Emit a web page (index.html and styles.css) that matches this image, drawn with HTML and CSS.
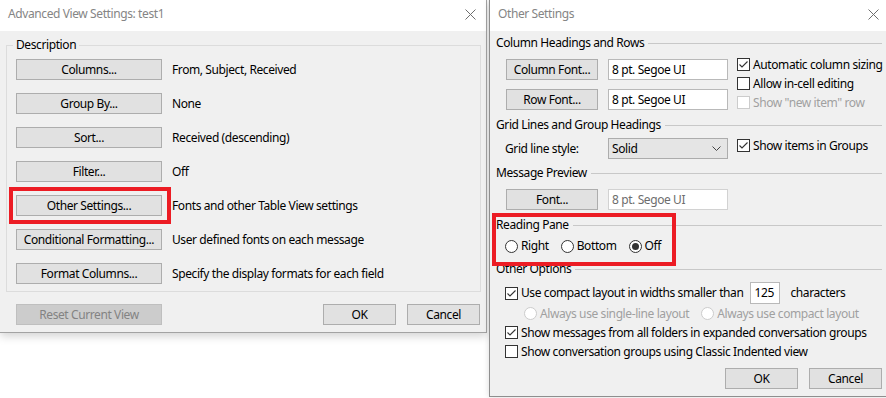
FILE: index.html
```html
<!DOCTYPE html>
<html lang="en">
<head>
    <meta charset="UTF-8">
    <meta name="viewport" content="width=device-width, initial-scale=1.0">
    <title>Advanced View Settings - Other Settings</title>
    <link rel="stylesheet" href="styles.css">
</head>
<body>
    <div class="desktop">

        <!-- Advanced View Settings dialog -->
        <div class="dialog dialog-view">
            <div class="titlebar">
                <span class="title">Advanced View Settings: test1</span>
                <svg class="close" width="11" height="11" viewBox="0 0 11 11"><path d="M0.5 0.5L10.5 10.5M10.5 0.5L0.5 10.5"/></svg>
            </div>
            <div class="dialog-body">
                <fieldset class="group">
                    <legend>Description</legend>
                    <div class="desc-list">
                        <div class="desc-row"><button class="btn btn-wide">Columns...</button><span>From, Subject, Received</span></div>
                        <div class="desc-row"><button class="btn btn-wide">Group By...</button><span>None</span></div>
                        <div class="desc-row"><button class="btn btn-wide">Sort...</button><span>Received (descending)</span></div>
                        <div class="desc-row"><button class="btn btn-wide">Filter...</button><span>Off</span></div>
                        <div class="desc-row"><button class="btn btn-wide">Other Settings...</button><span>Fonts and other Table View settings</span></div>
                        <div class="desc-row"><button class="btn btn-wide">Conditional Formatting...</button><span>User defined fonts on each message</span></div>
                        <div class="desc-row"><button class="btn btn-wide">Format Columns...</button><span>Specify the display formats for each field</span></div>
                    </div>
                </fieldset>
                <div class="view-footer">
                    <button class="btn btn-wide" disabled>Reset Current View</button>
                    <div class="actions">
                        <button class="btn btn-action">OK</button>
                        <button class="btn btn-action">Cancel</button>
                    </div>
                </div>
            </div>
            <div class="callout callout-view"></div>
        </div>

        <!-- Other Settings dialog -->
        <div class="dialog dialog-other">
            <div class="titlebar">
                <span class="title">Other Settings</span>
                <svg class="close" width="11" height="11" viewBox="0 0 11 11"><path d="M0.5 0.5L10.5 10.5M10.5 0.5L0.5 10.5"/></svg>
            </div>
            <div class="dialog-body">
                <div class="sec-head">Column Headings and Rows</div>
                <div class="font-section">
                    <div class="font-fields">
                        <button class="btn">Column Font...</button>
                        <div class="field">8 pt. Segoe UI</div>
                        <button class="btn">Row Font...</button>
                        <div class="field">8 pt. Segoe UI</div>
                    </div>
                    <div class="checks">
                        <div class="check-row">
                            <span class="box"><svg width="11" height="11" viewBox="0 0 11 11"><path d="M1.5 5.5L4 8L9.5 2.5"/></svg></span>
                            <span>Automatic column sizing</span>
                        </div>
                        <div class="check-row">
                            <span class="box"></span>
                            <span>Allow in-cell editing</span>
                        </div>
                        <div class="check-row is-disabled">
                            <span class="box"></span>
                            <span>Show "new item" row</span>
                        </div>
                    </div>
                </div>

                <div class="sec-head sec-gap">Grid Lines and Group Headings</div>
                <div class="grid-section">
                    <span class="grid-label">Grid line style:</span>
                    <div class="select">
                        <span>Solid</span>
                        <svg width="9" height="5" viewBox="0 0 9 5"><path d="M0.5 0.5L4.5 4.5L8.5 0.5"/></svg>
                    </div>
                    <div class="check-row">
                        <span class="box"><svg width="11" height="11" viewBox="0 0 11 11"><path d="M1.5 5.5L4 8L9.5 2.5"/></svg></span>
                        <span>Show items in Groups</span>
                    </div>
                </div>

                <div class="sec-head preview-head">Message Preview</div>
                <div class="preview-section">
                    <button class="btn">Font...</button>
                    <div class="field is-disabled">8 pt. Segoe UI</div>
                </div>

                <div class="sec-head pane-head">Reading Pane</div>
                <div class="radio-group">
                    <div class="radio-item"><span class="radio"></span><span>Right</span></div>
                    <div class="radio-item"><span class="radio"></span><span>Bottom</span></div>
                    <div class="radio-item"><span class="radio is-on"></span><span>Off</span></div>
                </div>

                <div class="sec-head pane-head">Other Options</div>
                <div class="options">
                    <div class="check-row option-first">
                        <span class="box"><svg width="11" height="11" viewBox="0 0 11 11"><path d="M1.5 5.5L4 8L9.5 2.5"/></svg></span>
                        <span>Use compact layout in widths smaller than</span>
                        <div class="field field-num">125</div>
                        <span>characters</span>
                    </div>
                    <div class="radio-group sub-radios is-disabled">
                        <div class="radio-item"><span class="radio"></span><span>Always use single-line layout</span></div>
                        <div class="radio-item"><span class="radio"></span><span>Always use compact layout</span></div>
                    </div>
                    <div class="check-row">
                        <span class="box"><svg width="11" height="11" viewBox="0 0 11 11"><path d="M1.5 5.5L4 8L9.5 2.5"/></svg></span>
                        <span>Show messages from all folders in expanded conversation groups</span>
                    </div>
                    <div class="check-row">
                        <span class="box"></span>
                        <span>Show conversation groups using Classic Indented view</span>
                    </div>
                </div>

                <div class="other-footer">
                    <button class="btn btn-action">OK</button>
                    <button class="btn btn-action">Cancel</button>
                </div>
            </div>
            <div class="callout callout-pane"></div>
        </div>

    </div>
</body>
</html>
```

FILE: styles.css
```css
* {
    margin: 0;
    padding: 0;
    box-sizing: border-box;
}

body {
    font-family: 'Noto Sans', sans-serif;
    font-size: 12px;
    line-height: 16px;
    letter-spacing: -0.4px;
    color: #000;
    background: #ffffff;
}

.desktop {
    position: relative;
    width: 886px;
    height: 398px;
    overflow: hidden;
}

/* Windows */
.dialog {
    position: absolute;
    top: 0;
    display: flex;
    flex-direction: column;
    background: #f0f0f0;
}

.dialog-view {
    left: 0;
    width: 487px;
    border-right: 1px solid #a3a3a3;
    border-bottom: 1px solid #a3a3a3;
    box-shadow: 0 3px 9px rgba(0, 0, 0, 0.18);
}

.dialog-other {
    left: 489px;
    width: 399px;
    border-left: 1px solid #8e8e8e;
    border-bottom: 1px solid #8e8e8e;
    box-shadow: 0 0 6px rgba(0, 0, 0, 0.15);
}

.titlebar {
    height: 31px;
    background: #ffffff;
    display: flex;
    align-items: center;
    justify-content: space-between;
    padding: 0 10px 3px 8px;
    color: #858585;
}

.dialog-other .titlebar {
    padding-right: 9px;
}

.close path {
    stroke: #6e6e6e;
    stroke-width: 1;
    fill: none;
}

/* Buttons and fields */
.btn {
    font: inherit;
    letter-spacing: inherit;
    height: 21px;
    line-height: 19px;
    background: #e1e1e1;
    border: 1px solid #adadad;
    color: #000;
    text-align: center;
    white-space: nowrap;
}

.btn:disabled {
    background: #cccccc;
    border-color: #bfbfbf;
    color: #838383;
}

.btn-wide {
    width: 146px;
}

.btn-action {
    width: 73px;
}

.field {
    height: 21px;
    line-height: 19px;
    background: #ffffff;
    border: 1px solid #b9b9b9;
    padding-left: 3px;
    white-space: nowrap;
}

.field.is-disabled {
    border-color: #d2d2d2;
    color: #6d6d6d;
}

/* Advanced View Settings body */
.dialog-view .dialog-body {
    padding: 6px 5px 7px 6px;
}

.group {
    border: 1px solid #dcdcdc;
    padding: 6px 9px 7px 9px;
}

.group legend {
    padding: 0 3px;
    margin-left: -3px;
    line-height: 16px;
}

.desc-list {
    display: flex;
    flex-direction: column;
    gap: 13px;
}

.desc-row {
    display: flex;
    align-items: center;
    gap: 10px;
    white-space: nowrap;
}

.view-footer {
    display: flex;
    justify-content: space-between;
    margin-top: 12px;
    padding: 0 1px 0 10px;
}

.actions {
    display: flex;
    gap: 11px;
}

/* Other Settings body */
.dialog-other .dialog-body {
    padding: 4px 6px 7px 6px;
}

.sec-head {
    display: flex;
    align-items: center;
    gap: 4px;
    height: 16px;
    white-space: nowrap;
}

.sec-head::after {
    content: "";
    flex: 1;
    height: 1px;
    background: #c8c8c8;
}

.sec-gap {
    margin-top: 5px;
}

.preview-head {
    margin-top: 6px;
}

.pane-head {
    margin-top: 7px;
}

.font-section {
    display: flex;
    margin-top: 4px;
    padding-left: 10px;
}

.font-fields {
    display: grid;
    grid-template-columns: 92px 120px;
    gap: 7px 10px;
    padding-top: 4px;
}

.checks {
    display: flex;
    flex-direction: column;
    margin-left: 9px;
}

.check-row {
    display: flex;
    align-items: center;
    gap: 3px;
    height: 19px;
    white-space: nowrap;
}

.box {
    width: 13px;
    height: 13px;
    border: 1px solid #333333;
    background: #ffffff;
    flex-shrink: 0;
}

.box svg {
    display: block;
}

.box path {
    stroke: #333333;
    stroke-width: 1.1;
    fill: none;
}

.is-disabled {
    color: #a0a0a0;
}

.is-disabled .box,
.is-disabled .radio {
    border-color: #cccccc;
}

.grid-section {
    display: flex;
    align-items: flex-start;
    margin-top: 3px;
    padding-left: 9px;
    height: 23px;
}

.grid-label {
    width: 103px;
    margin-top: 2px;
    line-height: 21px;
}

.select {
    width: 120px;
    height: 21px;
    margin-top: 2px;
    display: flex;
    align-items: center;
    justify-content: space-between;
    padding: 0 6px 0 3px;
    background: #e5e5e5;
    border: 1px solid #acacac;
}

.select path {
    stroke: #444444;
    fill: none;
}

.grid-section .check-row {
    margin-left: 9px;
}

.preview-section {
    display: flex;
    gap: 10px;
    margin-top: 8px;
    padding-left: 10px;
}

.preview-section .btn {
    width: 92px;
}

.preview-section .field {
    width: 120px;
}

.radio-group {
    display: flex;
    align-items: center;
    gap: 12px;
    height: 16px;
    margin-top: 5px;
    padding-left: 9px;
}

.radio-item {
    display: flex;
    align-items: center;
    gap: 3px;
    white-space: nowrap;
}

.radio {
    width: 13px;
    height: 13px;
    border: 1px solid #333333;
    border-radius: 50%;
    background: #ffffff;
    display: flex;
    align-items: center;
    justify-content: center;
}

.radio.is-on::after {
    content: "";
    width: 7px;
    height: 7px;
    border-radius: 50%;
    background: #333333;
}

.options {
    margin-top: 5px;
    padding-left: 9px;
}

.option-first {
    height: 22px;
}

.field-num {
    width: 30px;
    height: 22px;
    line-height: 20px;
    margin: 0 7px 0 4px;
}

.sub-radios {
    height: 19px;
    margin-top: 0;
    padding-left: 19px;
    gap: 12px;
}

.other-footer {
    display: flex;
    justify-content: flex-end;
    gap: 11px;
    margin-top: 7px;
}

/* Red annotation frames */
.callout {
    position: absolute;
    border: 4px solid #ec1c24;
    pointer-events: none;
}

.callout-view {
    left: 9px;
    top: 187px;
    width: 162px;
    height: 37px;
}

.callout-pane {
    left: 2px;
    top: 213px;
    width: 184px;
    height: 53px;
}
```
